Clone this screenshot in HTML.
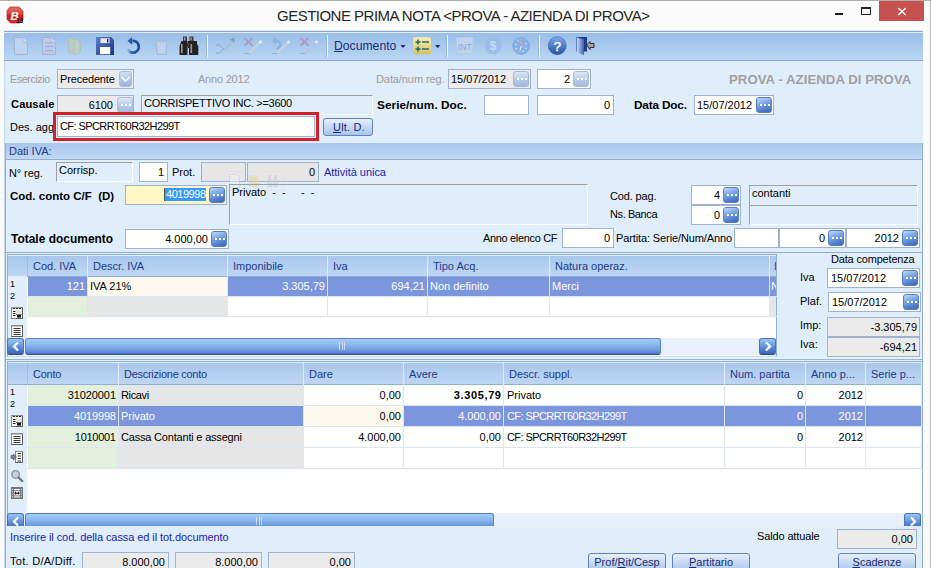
<!DOCTYPE html>
<html><head><meta charset="utf-8">
<style>
*{margin:0;padding:0;box-sizing:border-box}
html,body{width:931px;height:568px;overflow:hidden;background:#fbfbfb;font-family:"Liberation Sans",sans-serif;font-size:11px;color:#000}
.a{position:absolute}
.t{position:absolute;white-space:pre;line-height:13px;font-size:11px}
.b{font-weight:bold}
.g{color:#9a9a9a}
.f{position:absolute;background:#fff;border:1px solid #9fb3d0}
.fg{background:#ebebeb}
.ft{position:absolute;white-space:pre;line-height:13px;font-size:11px}
.r{text-align:right}
.eb{position:absolute;width:16px;height:16px;border-radius:3px;background:linear-gradient(160deg,#c2dcfa,#82acea 35%,#5684d2 70%,#3a64b2);border:1px solid #5a7ec0}
.eb:after{content:"";position:absolute;left:3px;top:6px;width:2px;height:2px;background:#fff;box-shadow:4px 0 #fff,8px 0 #fff}
.ebd{background:linear-gradient(#dae6f6,#b4c8e6 60%,#a4bade);border-color:#a6badc}
.sunk{position:absolute;border-top:1px solid #a0a0a0;border-left:1px solid #a0a0a0;border-right:1px solid #fff;border-bottom:1px solid #fff}
</style></head><body>
<!-- window frame -->
<div class="a" style="left:0;top:0;width:931px;height:1px;background:#b0b0b0"></div>
<div class="a" style="left:930px;top:0;width:1px;height:568px;background:#b8b8b8"></div>
<!-- title -->
<svg class="a" style="left:6px;top:6px" width="18" height="18">
<defs><linearGradient id="lg1" x1="0" y1="0" x2="0" y2="1"><stop offset="0" stop-color="#e86a6a"></stop><stop offset="0.45" stop-color="#d84040"></stop><stop offset="0.5" stop-color="#cc2020"></stop><stop offset="1" stop-color="#e02a30"></stop></linearGradient></defs>
<path d="M4 1 H13 L17 5 V14 L13.5 17 H4.5 L1 13.5 V4.5 Z" fill="url(#lg1)" stroke="#b01818" stroke-width="0.6"></path>
<text x="8.6" y="13.6" font-family="Liberation Sans" font-weight="bold" font-style="italic" font-size="11.5" text-anchor="middle" fill="#fff">B</text>
<text x="13.6" y="16.8" font-family="Liberation Sans" font-weight="bold" font-size="6.5" text-anchor="middle" fill="#111">13</text>
</svg>
<div class="t" style="left: 277px; top: 6.5px; font-size: 15px; line-height: 18px; color: rgb(38, 38, 38); letter-spacing: -0.51px;">GESTIONE PRIMA NOTA &lt;PROVA - AZIENDA DI PROVA&gt;</div>
<div class="a" style="left:835px;top:13px;width:8px;height:2px;background:#1a1a1a"></div>
<div class="a" style="left:861px;top:7px;width:10px;height:8px;border:1px solid #222;border-top-width:2px"></div>
<div class="a" style="left:879px;top:1px;width:45px;height:20px;background:#c75050"></div>
<svg class="a" style="left:897px;top:7px" width="10" height="9"><path d="M1.3 1 L8.7 8 M8.7 1 L1.3 8" stroke="#fff" stroke-width="1.5"></path></svg>

<!-- toolbar -->
<div class="a" style="left:4px;top:30px;width:919px;height:1px;background:#e0e8f0"></div><div class="a" style="left:4px;top:31px;width:919px;height:30px;background:linear-gradient(#98bce8,#bad6f3);border-top:1px solid #8ba6c8;border-bottom:1px solid #8aaad0"></div>
<div class="a" style="left:4px;top:32px;width:919px;height:1px;background:#e2f0fc"></div>


<svg class="a" style="left:0;top:0" width="931" height="62" viewBox="0 0 931 62">
<defs>
<linearGradient id="flp" x1="0" y1="0" x2="1" y2="1"><stop offset="0" stop-color="#5b82cc"></stop><stop offset="1" stop-color="#17327e"></stop></linearGradient>
<linearGradient id="hlp" x1="0" y1="0" x2="0" y2="1"><stop offset="0" stop-color="#7eaaea"></stop><stop offset="1" stop-color="#2850a8"></stop></linearGradient>
<linearGradient id="yel" x1="0" y1="0" x2="0" y2="1"><stop offset="0" stop-color="#fbf0a8"></stop><stop offset="1" stop-color="#d8c060"></stop></linearGradient>
<linearGradient id="door" x1="0" y1="0" x2="1" y2="0"><stop offset="0" stop-color="#c8d8f4"></stop><stop offset="1" stop-color="#3a5cb0"></stop></linearGradient>
</defs>
<!-- faded doc 1 -->
<path d="M14.5 37.5 H23 L27.5 42 V54.5 H14.5 Z" fill="#bcd4f2" stroke="#9fb8d8" stroke-width="1"></path>
<path d="M23 37.5 V42 H27.5" fill="#d8e6f8" stroke="#a8bedc" stroke-width="1"></path>
<!-- faded doc 2 -->
<path d="M42.5 37.5 H51 L55.5 42 V54.5 H42.5 Z" fill="#bccbec" stroke="#a4b4d8" stroke-width="1"></path>
<path d="M51 37.5 V42 H55.5" fill="#d8e2f6" stroke="#a8b8dc" stroke-width="1"></path>
<path d="M45 43 H52 M45 46.5 H53 M45 50.5 H53" stroke="#9eaed4" stroke-width="1"></path>
<!-- faded folder -->
<path d="M68.5 37.5 L77 39.5 L80.5 42 V51 L77 55 L68.5 52 Z" fill="#b8ccc4" stroke="#a8bcbc" stroke-width="0.8"></path>
<path d="M77 39.5 V55" stroke="#c8d8d0" stroke-width="1"></path>
<!-- floppy -->
<path d="M96 37 H111 L114 40 V55 H96 Z" fill="url(#flp)"></path>
<rect x="100.5" y="38.3" width="9" height="4.8" fill="#e8ecf2"></rect>
<rect x="107" y="39" width="1.4" height="3.4" fill="#1a2a5a"></rect>
<rect x="100" y="47" width="10.2" height="7.2" fill="#fff"></rect>
<!-- undo -->
<linearGradient id="und" x1="0" y1="0" x2="1" y2="0"><stop offset="0" stop-color="#2c5cb0" stop-opacity="0.2"></stop><stop offset="0.35" stop-color="#2c5cb0"></stop><stop offset="1" stop-color="#1e4a9c"></stop></linearGradient>
<path d="M132.3 40.9 A5.9 5.9 0 1 1 127.6 49.3" fill="none" stroke="url(#und)" stroke-width="2.8"></path>
<path d="M127.5 41 L132 37 L132.3 44.8 Z" fill="#2a58ac"></path>
<!-- faded trash -->
<path d="M155 40 H168 M158.5 39.5 V37.8 H164.5 V39.5" stroke="#a8c0e0" stroke-width="1.2" fill="none"></path>
<path d="M156 41 H167 L166 54.5 H157 Z" fill="#b6cdec" stroke="#a2badc" stroke-width="1"></path>
<path d="M159 43 V53 M161.5 43 V53 M164 43 V53" stroke="#c6d8f2" stroke-width="1"></path>
<!-- binoculars -->
<g>
<rect x="183" y="36.5" width="4" height="5" fill="#3a3a3a"></rect>
<rect x="189.5" y="36.5" width="4" height="5" fill="#3a3a3a"></rect>
<path d="M181 41 H188 V48 H197 V41 H188" fill="#2a2a2a"></path>
<rect x="187" y="43" width="3" height="4" fill="#444"></rect>
<path d="M179.5 46 L181.5 41 H187.5 V55 H179.5 Z" fill="#222"></path>
<path d="M189 41 H195 L198.3 46 V55 H189 Z" fill="#222"></path>
<rect x="181" y="44" width="1.6" height="9" fill="#9a9a9a"></rect>
<rect x="190.5" y="44" width="1.6" height="9" fill="#9a9a9a"></rect>
<rect x="184" y="37.5" width="1.2" height="3" fill="#aaa"></rect>
<rect x="190.5" y="37.5" width="1.2" height="3" fill="#aaa"></rect>
</g>
<!-- separators -->
<g stroke-width="1">
<path d="M206.5 35 V57" stroke="#9ab6da"></path><path d="M207.5 35 V57" stroke="#eef6fe"></path>
<path d="M326.5 35 V57" stroke="#9ab6da"></path><path d="M327.5 35 V57" stroke="#eef6fe"></path>
<path d="M446.5 35 V57" stroke="#9ab6da"></path><path d="M447.5 35 V57" stroke="#eef6fe"></path>
<path d="M538.5 35 V57" stroke="#9ab6da"></path><path d="M539.5 35 V57" stroke="#eef6fe"></path>
</g>
<!-- scissors faded -->
<path d="M216 45 H219 L224 49 L219 53 H216" fill="none" stroke="#8aa6c8" stroke-width="0.9"></path>
<path d="M224 49 L234 39 L235 41 L226 50 Z" fill="#a8bcd4"></path>
<path d="M230 40 L234 37.5 L235 42 Z" fill="#7a98be"></path>
<path d="M225 50 H234 L233 53 H228 Z" fill="#b4c8e0" opacity="0.7"></path>
<!-- X + pen 1 -->
<path d="M244.5 37.8 L252.5 45.8 M252.5 37.8 L244.5 45.8" stroke="#a89cc4" stroke-width="1.8"></path>
<path d="M249 53 L260.5 42" stroke="#c6d2e2" stroke-width="2.2" stroke-linecap="round"></path>
<circle cx="260.5" cy="42" r="1.4" fill="#e8eef6"></circle>
<path d="M244 53.5 H250" stroke="#96aed0" stroke-width="0.9"></path>
<!-- undo + pen -->
<path d="M277 49 L280.5 46 Q281 41 276 41 H273" fill="none" stroke="#88b0e0" stroke-width="2"></path>
<path d="M272 41 L276 37.5 V44.5 Z" fill="#88b0e0"></path>
<path d="M277 53 L288.5 42" stroke="#c6d2e2" stroke-width="2.2" stroke-linecap="round"></path>
<circle cx="288.5" cy="42" r="1.4" fill="#e8eef6"></circle>
<path d="M272 53.5 H278" stroke="#96aed0" stroke-width="0.9"></path>
<!-- X + pen 2 -->
<path d="M300.5 37.8 L308.5 45.8 M308.5 37.8 L300.5 45.8" stroke="#a89cc4" stroke-width="1.8"></path>
<path d="M305 53 L316.5 42" stroke="#b4c4e8" stroke-width="2.2" stroke-linecap="round"></path>
<circle cx="316.5" cy="42" r="1.4" fill="#e8eef6"></circle>
<path d="M300 53.5 H306" stroke="#96aed0" stroke-width="0.9"></path>
<!-- dropdown arrows -->
<path d="M400.5 45 H405.5 L403 48 Z" fill="#1c2c6c"></path>
<path d="M435 45 H440.5 L437.7 48 Z" fill="#1c2c6c"></path>
<!-- yellow list icon -->
<rect x="413" y="37.3" width="18" height="17" rx="2" fill="url(#yel)"></rect>
<path d="M415.5 42 H420.5 M418 39.5 V44.5 M415.5 49 H420.5 M418 46.5 V51.5 M422 42 H429 M422 49 H429" stroke="#1f6a7c" stroke-width="1.5"></path>
<!-- INT faded -->
<rect x="456.5" y="37.5" width="16.5" height="16.5" fill="#bcd4f0" stroke="#b4cae8" stroke-width="1"></rect>
<text x="464.8" y="49.5" font-family="Liberation Sans" font-size="9.5" text-anchor="middle" fill="#90a8dc" textLength="14" lengthAdjust="spacingAndGlyphs">INT</text>
<!-- $ faded -->
<circle cx="493.2" cy="45.7" r="8.6" fill="#9cbce8"></circle>
<text x="493.2" y="50" font-family="Liberation Sans" font-size="12" font-weight="bold" text-anchor="middle" fill="#c8dcf6">$</text>
<!-- compass faded -->
<circle cx="521.1" cy="46" r="8.4" fill="#86b2e8" stroke="#7ca4da" stroke-width="0.8"></circle>
<path d="M517.5 39.5 L518.5 41.5 M514.8 44 L516.5 44.8 M515 49 L516.8 48.3 M523.5 52 L522.8 50.3 M526.8 43.5 L525 44.3 M526.8 48.5 L525 48" stroke="#dceaf8" stroke-width="1"></path>
<path d="M523.2 39 L520.3 47 L519.5 52.5 L522 46 Z" fill="#e8f0fa"></path>
<path d="M523.2 39 L520.3 46.5 L522.3 45.5 Z" fill="#c88c9c"></path>
<!-- help -->
<circle cx="557.2" cy="45.7" r="9" fill="url(#hlp)" stroke="#3a64b0" stroke-width="0.6"></circle>
<text x="557.2" y="50.8" font-family="Liberation Sans" font-size="13.5" text-anchor="middle" fill="#fff" stroke="#fff" stroke-width="0.4">?</text>
<!-- door exit -->
<rect x="576.5" y="37" width="10.5" height="14.5" fill="#1e3c8c"></rect>
<path d="M577 37.5 L584 39.5 V55 L577 52.5 Z" fill="url(#door)"></path>
<path d="M586.5 45 L590 41.5 V43.5 H594 V47.5 H590 V49.5 Z" fill="#a0a0a0" stroke="#222" stroke-width="0.9"></path>
</svg>
<div class="t" style="left:334px;top:39px;color:#1c2c78;font-size:12.2px;line-height:14px"><u>D</u>ocumento</div>
<!-- form background -->
<div class="a" style="left:4px;top:61px;width:919px;height:507px;background:#e0eefc;border-left:1px solid #c6d6e8"></div>

<!-- row 1 -->
<div class="t g" style="left: 10px; top: 73px; letter-spacing: -0.541px;">Esercizio</div>
<div class="f fg" style="left:57px;top:69px;width:77px;height:20px"></div>
<div class="ft" style="left: 60px; top: 73px; letter-spacing: -0.163px;">Precedente</div>
<div class="a" style="left:119px;top:71px;width:13px;height:16px;border-radius:3px;background:linear-gradient(#d0def2,#9ab2da);border:1px solid #a8bcdc"></div><svg class="a" style="left:119px;top:71px" width="13" height="16"><path d="M2.5 6 L6.5 10 L10.5 6" stroke="#fff" stroke-width="1.6" fill="none" opacity="0.9"></path></svg>
<div class="t g" style="left: 198px; top: 73px; letter-spacing: -0.215px;">Anno 2012</div>
<div class="t g" style="left: 376px; top: 73px; letter-spacing: -0.092px;">Data/num reg.</div>
<div class="f fg" style="left:448px;top:69px;width:83px;height:20px"></div>
<div class="ft" style="left:451px;top:73px">15/07/2012</div>
<div class="eb ebd" style="left:513px;top:71px"></div>
<div class="f" style="left:537px;top:69px;width:54px;height:20px"></div>
<div class="ft r" style="left:540px;top:73px;width:30px">2</div>
<div class="eb ebd" style="left:573px;top:71px"></div>
<div class="t b g" style="left: 729px; top: 72px; font-size: 13.2px; line-height: 15px; color: rgb(160, 160, 160); letter-spacing: 0.047px;">PROVA - AZIENDA DI PROVA</div>

<!-- row 2 -->
<div class="t b" style="left: 11px; top: 98px; font-size: 11.2px; letter-spacing: 0.08px;">Causale</div>
<div class="f fg" style="left:57px;top:95px;width:77px;height:20px"></div>
<div class="ft r" style="left: 59.939px; top: 99px; width: 53px; letter-spacing: -0.061px;">6100</div>
<div class="eb ebd" style="left:117px;top:97px"></div>
<div class="sunk" style="left:141px;top:95px;width:232px;height:20px"></div>
<div class="ft" style="left: 144px; top: 97px; letter-spacing: -0.295px;">CORRISPETTIVO INC. &gt;=3600</div>
<div class="t b" style="left: 377px; top: 99px; font-size: 11.8px; letter-spacing: 0.038px;">Serie/num. Doc.</div>
<div class="f" style="left:484px;top:95px;width:45px;height:20px"></div>
<div class="f" style="left:537px;top:95px;width:77px;height:20px"></div>
<div class="ft r" style="left:540px;top:99px;width:70px">0</div>
<div class="t b" style="left: 634px; top: 99px; font-size: 11.8px; letter-spacing: -0.178px;">Data Doc.</div>
<div class="f" style="left:694px;top:95px;width:80px;height:20px"></div>
<div class="ft" style="left:697px;top:99px">15/07/2012</div>
<div class="eb" style="left:756px;top:97px"></div>

<!-- row 3 -->
<div class="t" style="left:10px;top:121px">Des. agg</div>
<div class="a" style="left:53px;top:112px;width:266px;height:29px;border:3px solid #d0202a"></div>
<div class="f" style="left:57px;top:116px;width:258px;height:21px"></div>
<div class="ft" style="left: 60px; top: 120px; letter-spacing: -0.575px;">CF: SPCRRT60R32H299T</div>
<div class="a" style="left:323px;top:118px;width:50px;height:18px;border-radius:3px;border:1px solid #6282bc;background:linear-gradient(#e8f0fc,#c8daf4 45%,#a8c4ec)"></div>
<div class="t" style="left: 333px; top: 121px; color: rgb(26, 42, 120); letter-spacing: 0.17px;"><u>U</u>lt. D.</div>

<!-- Dati IVA section -->
<div class="a" style="left:5px;top:143px;width:918px;height:17px;background:linear-gradient(#a9c7ec,#b6d1f1 60%,#c2d9f3);border-bottom:1px solid #8fb0d8"></div>
<div class="a" style="left:5px;top:143px;width:1px;height:425px;background:#90aed6"></div>
<div class="t" style="left:9px;top:145px;color:#1e3a8c">Dati IVA:</div>


<!-- Dati IVA rows -->
<div class="t" style="left: 9px; top: 167px; letter-spacing: -0.093px;">N° reg.</div>
<div class="sunk" style="left:56px;top:162px;width:77px;height:20px"></div>
<div class="ft" style="left:59px;top:164px">Corrisp.</div>
<div class="f" style="left:139px;top:162px;width:29px;height:20px"></div>
<div class="ft r" style="left:141px;top:166px;width:23px">1</div>
<div class="t" style="left:172px;top:166px">Prot.</div>
<div class="f fg" style="left:201px;top:162px;width:45px;height:20px;background:#e6e6e6"></div>
<div class="f fg" style="left:247px;top:162px;width:72px;height:20px;background:#e6e6e6"></div>
<div class="ft r" style="left:250px;top:166px;width:65px">0</div>
<div class="t" style="left: 324px; top: 166px; color: rgb(28, 28, 172); letter-spacing: -0.029px;">Attività unica</div>

<svg class="a" style="left:220px;top:168px" width="70" height="26" opacity="0.55">
<rect x="4.5" y="3.5" width="59" height="19" rx="3" fill="none" stroke="#d6dce4" stroke-width="1"></rect>
<path d="M9.5 6.5 H16 L19.5 10 V19.5 H9.5 Z" fill="#eef2f6" stroke="#c4ccd6" stroke-width="1"></path>
<path d="M29 7 L37 8 L40 11 V17 L37 20 L29 18 Z" fill="#e4d4a4"></path>
<path d="M48 7 H51 V11 H48 Z M54 7 H57 V11 H54 Z M47 11 H52 V19.5 H47 Z M53 11 H58 V19.5 H53 Z" fill="#c8ccd4"></path>
</svg>
<div class="t b" style="left: 10px; top: 190px; font-size: 11.5px; letter-spacing: 0.004px;">Cod. conto C/F  (D)</div>
<div class="f" style="left:125px;top:185px;width:102px;height:20px;background:#fef7c4"></div>
<div class="ft" style="left: 164px; top: 188px; background: rgb(51, 153, 255); color: rgb(255, 255, 255); padding: 0px 0px 0px 1px; border-left: 1px solid rgb(85, 85, 85); letter-spacing: -0.471px;">4019998</div>
<div class="eb" style="left:209px;top:187px"></div>
<div class="sunk" style="left:229px;top:184px;width:359px;height:41px"></div>
<div class="ft" style="left:232px;top:186px">Privato  -  -     -  -</div>

<div class="t" style="left: 610px; top: 190px; letter-spacing: -0.15px;">Cod. pag.</div>
<div class="f" style="left:691px;top:185px;width:50px;height:20px"></div>
<div class="ft r" style="left:694px;top:189px;width:26px">4</div>
<div class="eb" style="left:723px;top:187px"></div>
<div class="t" style="left: 610px; top: 208px; letter-spacing: -0.406px;">Ns. Banca</div>
<div class="f" style="left:691px;top:205px;width:50px;height:20px"></div>
<div class="ft r" style="left:694px;top:209px;width:26px">0</div>
<div class="eb" style="left:723px;top:207px"></div>
<div class="sunk" style="left:749px;top:185px;width:169px;height:21px"></div>
<div class="ft" style="left:752px;top:187px">contanti</div>
<div class="sunk" style="left:749px;top:205px;width:169px;height:20px"></div>

<div class="t b" style="left: 11px; top: 233px; font-size: 11.9px; letter-spacing: 0.039px;">Totale documento</div>
<div class="f" style="left:125px;top:229px;width:104px;height:20px"></div>
<div class="ft r" style="left:128px;top:233px;width:80px">4.000,00</div>
<div class="eb" style="left:211px;top:231px"></div>
<div class="t" style="left: 483px; top: 232px; letter-spacing: -0.338px;">Anno elenco CF</div>
<div class="f" style="left:562px;top:228px;width:52px;height:20px"></div>
<div class="ft r" style="left:565px;top:232px;width:45px">0</div>
<div class="t" style="left: 616px; top: 232px; letter-spacing: -0.115px;">Partita: Serie/Num/Anno</div>
<div class="f" style="left:734px;top:228px;width:45px;height:20px"></div>
<div class="f" style="left:779px;top:228px;width:67px;height:20px"></div>
<div class="ft r" style="left:782px;top:232px;width:43px">0</div>
<div class="eb" style="left:828px;top:230px"></div>
<div class="f" style="left:846px;top:228px;width:74px;height:20px"></div>
<div class="ft r" style="left:849px;top:232px;width:50px">2012</div>
<div class="eb" style="left:902px;top:230px"></div>
<div class="a" style="left:6px;top:252px;width:917px;height:1px;background:#92acd0"></div>
<div class="a" style="left:7px;top:254px;width:770px;height:103px;background:#fff;border:1px solid #8fb0d8;border-bottom-color:#c4daf2"></div>
<div class="a" style="left:8px;top:255px;width:768px;height:22px;background:linear-gradient(#a9c7ed,#bed6f3);border-top:1px solid #e2eefb;border-bottom:1px solid #8fb0d8"></div>
<div class="a" style="left:8px;top:276px;width:19px;height:79px;background:#e2eefb"></div>
<div class="a" style="left:87px;top:255px;width:1px;height:21px;background:#dfeafa"></div>
<div class="t" style="left:33px;top:260px;color:#1e3a8c">Cod. IVA</div>
<div class="a" style="left:227px;top:255px;width:1px;height:21px;background:#dfeafa"></div>
<div class="t" style="left:93px;top:260px;color:#1e3a8c">Descr. IVA</div>
<div class="a" style="left:327px;top:255px;width:1px;height:21px;background:#dfeafa"></div>
<div class="t" style="left:233px;top:260px;color:#1e3a8c">Imponibile</div>
<div class="a" style="left:427px;top:255px;width:1px;height:21px;background:#dfeafa"></div>
<div class="t" style="left:333px;top:260px;color:#1e3a8c">Iva</div>
<div class="a" style="left:549px;top:255px;width:1px;height:21px;background:#dfeafa"></div>
<div class="t" style="left:433px;top:260px;color:#1e3a8c">Tipo Acq.</div>
<div class="a" style="left:769px;top:255px;width:1px;height:21px;background:#dfeafa"></div>
<div class="t" style="left:555px;top:260px;color:#1e3a8c">Natura operaz.</div>
<div class="t" style="left:774px;top:260px;color:#1e3a8c;overflow:hidden;width:2px">I</div>
<div class="a" style="left:28px;top:277px;width:59px;height:19px;background:#7b96dc"></div>
<div class="t r" style="left:28px;top:280px;width:57px;color:#fff">121</div>
<div class="a" style="left:28px;top:297px;width:59px;height:19px;background:#e2f0dc"></div>
<div class="a" style="left:87px;top:276px;width:1px;height:41px;background:#dce6f2"></div>
<div class="a" style="left:88px;top:277px;width:139px;height:19px;background:#fef9ee"></div>
<div class="t" style="left:90px;top:280px;color:#000;overflow:hidden;width:137px">IVA 21%</div>
<div class="a" style="left:88px;top:297px;width:139px;height:19px;background:#e6e6e6"></div>
<div class="a" style="left:227px;top:276px;width:1px;height:41px;background:#dce6f2"></div>
<div class="a" style="left:228px;top:277px;width:99px;height:19px;background:#7b96dc"></div>
<div class="t r" style="left:228px;top:280px;width:97px;color:#fff">3.305,79</div>
<div class="a" style="left:228px;top:297px;width:99px;height:19px;background:#fff"></div>
<div class="a" style="left:327px;top:276px;width:1px;height:41px;background:#dce6f2"></div>
<div class="a" style="left:328px;top:277px;width:99px;height:19px;background:#7b96dc"></div>
<div class="t r" style="left:328px;top:280px;width:97px;color:#fff">694,21</div>
<div class="a" style="left:328px;top:297px;width:99px;height:19px;background:#fff"></div>
<div class="a" style="left:427px;top:276px;width:1px;height:41px;background:#dce6f2"></div>
<div class="a" style="left:428px;top:277px;width:121px;height:19px;background:#7b96dc"></div>
<div class="t" style="left:430px;top:280px;color:#fff;overflow:hidden;width:119px">Non definito</div>
<div class="a" style="left:428px;top:297px;width:121px;height:19px;background:#fff"></div>
<div class="a" style="left:549px;top:276px;width:1px;height:41px;background:#dce6f2"></div>
<div class="a" style="left:550px;top:277px;width:219px;height:19px;background:#7b96dc"></div>
<div class="t" style="left:552px;top:280px;color:#fff;overflow:hidden;width:217px">Merci</div>
<div class="a" style="left:550px;top:297px;width:219px;height:19px;background:#fff"></div>
<div class="a" style="left:769px;top:276px;width:1px;height:41px;background:#dce6f2"></div>
<div class="a" style="left:770px;top:277px;width:6px;height:19px;background:#7b96dc"></div>
<div class="t" style="left:771px;top:280px;color:#fff;overflow:hidden;width:5px">N</div>
<div class="a" style="left:770px;top:297px;width:6px;height:19px;background:#e6e6e6"></div>
<div class="a" style="left:27px;top:296px;width:750px;height:1px;background:#dce6f2"></div>
<div class="a" style="left:27px;top:316px;width:750px;height:1px;background:#dce6f2"></div>
<div class="t" style="left:10px;top:280px;font-size:9px;line-height:9px;color:#000">1</div>
<div class="t" style="left:10px;top:291.5px;font-size:9px;line-height:9px">2</div>
<div class="a" style="left:8px;top:338px;width:768px;height:17px;background:#e8f1fb"></div>
<div class="a" style="left:7px;top:338px;width:17px;height:17px;border-radius:3px;background:linear-gradient(#9cc6f4,#5e8eda 55%,#3a62b2);border:1px solid #4a70b8;border-bottom-color:#2a4888"></div>
<svg class="a" style="left:11px;top:341px" width="10" height="11"><path d="M7 1.5 L3 5.5 L7 9.5" stroke="#fff" stroke-width="2.2" fill="none"></path></svg>
<div class="a" style="left:25px;top:338px;width:636px;height:17px;border-radius:3px;background:linear-gradient(#a8cef6,#8ab6ec 40%,#6c9ade 75%,#4e78c4);border:1px solid #5a80c4;border-bottom-color:#2c4a90"></div>
<div class="a" style="left:339px;top:342px;width:6px;height:8px;border-left:1px solid #c8dcf6;border-right:1px solid #c8dcf6;background:linear-gradient(90deg,transparent 2px,#c8dcf6 2px,#c8dcf6 3px,transparent 3px)"></div>
<div class="a" style="left:759px;top:338px;width:17px;height:17px;border-radius:3px;background:linear-gradient(#9cc6f4,#5e8eda 55%,#3a62b2);border:1px solid #4a70b8;border-bottom-color:#2a4888"></div>
<svg class="a" style="left:763px;top:341px" width="10" height="11"><path d="M3 1.5 L7 5.5 L3 9.5" stroke="#fff" stroke-width="2.2" fill="none"></path></svg>
<div class="t" style="left: 831px; top: 253px; letter-spacing: -0.18px;">Data competenza</div>
<div class="t" style="left:800px;top:271px">Iva</div>
<div class="f" style="left:827px;top:268px;width:93px;height:20px"></div>
<div class="ft" style="left:831px;top:272px">15/07/2012</div>
<div class="eb" style="left:902px;top:270px"></div>
<div class="t" style="left:800px;top:295px">Plaf.</div>
<div class="f" style="left:828px;top:292px;width:93px;height:20px"></div>
<div class="ft" style="left:832px;top:296px">15/07/2012</div>
<div class="eb" style="left:903px;top:294px"></div>
<div class="t" style="left:800px;top:319px">Imp:</div>
<div class="f fg" style="left:827px;top:317px;width:93px;height:20px"></div>
<div class="ft r" style="left:830px;top:321px;width:87px">-3.305,79</div>
<div class="t" style="left:800px;top:338px">Iva:</div>
<div class="f fg" style="left:827px;top:337px;width:93px;height:20px"></div>
<div class="ft r" style="left:830px;top:341px;width:87px">-694,21</div>
<div class="a" style="left:6px;top:357px;width:917px;height:2px;background:#e4f4fd"></div><div class="a" style="left:6px;top:359px;width:917px;height:1px;background:#9ab2d2"></div>
<div class="a" style="left:7px;top:361px;width:916px;height:170px;background:#fff;border:1px solid #8fb0d8;border-bottom:none"></div>
<div class="a" style="left:8px;top:362px;width:914px;height:23px;background:linear-gradient(#a9c7ed,#bed6f3);border-top:1px solid #e2eefb;border-bottom:1px solid #8fb0d8"></div>
<div class="a" style="left:8px;top:385px;width:19px;height:128px;background:#e2eefb"></div>
<div class="a" style="left:118px;top:362px;width:1px;height:23px;background:#dfeafa"></div>
<div class="t" style="left: 33px; top: 368px; color: rgb(30, 58, 140); letter-spacing: -0.265px;">Conto</div>
<div class="a" style="left:303px;top:362px;width:1px;height:23px;background:#dfeafa"></div>
<div class="t" style="left: 124px; top: 368px; color: rgb(30, 58, 140); letter-spacing: -0.271px;">Descrizione conto</div>
<div class="a" style="left:403px;top:362px;width:1px;height:23px;background:#dfeafa"></div>
<div class="t" style="left:309px;top:368px;color:#1e3a8c">Dare</div>
<div class="a" style="left:503px;top:362px;width:1px;height:23px;background:#dfeafa"></div>
<div class="t" style="left:409px;top:368px;color:#1e3a8c">Avere</div>
<div class="a" style="left:724px;top:362px;width:1px;height:23px;background:#dfeafa"></div>
<div class="t" style="left:509px;top:368px;color:#1e3a8c">Descr. suppl.</div>
<div class="a" style="left:805px;top:362px;width:1px;height:23px;background:#dfeafa"></div>
<div class="t" style="left:730px;top:368px;color:#1e3a8c">Num. partita</div>
<div class="a" style="left:865px;top:362px;width:1px;height:23px;background:#dfeafa"></div>
<div class="t" style="left:811px;top:368px;color:#1e3a8c">Anno p...</div>
<div class="a" style="left:921px;top:362px;width:1px;height:23px;background:#dfeafa"></div>
<div class="t" style="left:871px;top:368px;color:#1e3a8c">Serie p...</div>
<div class="a" style="left:28px;top:385px;width:90px;height:20px;background:#e2f0dc"></div>
<div class="t r" style="left: 27.907px; top: 389px; width: 88px; color: rgb(0, 0, 0); letter-spacing: -0.093px;">31020001</div>
<div class="a" style="left:119px;top:385px;width:184px;height:20px;background:#e6e6e6"></div>
<div class="t" style="left: 121px; top: 389px; color: rgb(0, 0, 0); letter-spacing: -0.371px;">Ricavi</div>
<div class="a" style="left:304px;top:385px;width:99px;height:20px;background:#fff"></div>
<div class="t r" style="left:304px;top:389px;width:97px;color:#000">0,00</div>
<div class="a" style="left:404px;top:385px;width:99px;height:20px;background:#fff"></div>
<div class="t r" style="left: 404.625px; top: 389px; width: 97px; color: rgb(0, 0, 0); font-weight: bold; letter-spacing: 0.625px;">3.305,79</div>
<div class="a" style="left:504px;top:385px;width:220px;height:20px;background:#fff"></div>
<div class="t" style="left:507px;top:389px;color:#000">Privato</div>
<div class="a" style="left:725px;top:385px;width:80px;height:20px;background:#fff"></div>
<div class="t r" style="left:725px;top:389px;width:78px;color:#000">0</div>
<div class="a" style="left:806px;top:385px;width:59px;height:20px;background:#fff"></div>
<div class="t r" style="left:806px;top:389px;width:57px;color:#000">2012</div>
<div class="a" style="left:866px;top:385px;width:55px;height:20px;background:#fff"></div>
<div class="a" style="left:28px;top:406px;width:90px;height:20px;background:#7b96dc"></div>
<div class="t r" style="left: 27.845px; top: 410px; width: 88px; color: rgb(255, 255, 255); letter-spacing: -0.155px;">4019998</div>
<div class="a" style="left:119px;top:406px;width:184px;height:20px;background:#7b96dc"></div>
<div class="t" style="left: 121px; top: 410px; color: rgb(255, 255, 255); letter-spacing: -0.058px;">Privato</div>
<div class="a" style="left:304px;top:406px;width:99px;height:20px;background:#fef9ee"></div>
<div class="t r" style="left:304px;top:410px;width:97px;color:#000">0,00</div>
<div class="a" style="left:404px;top:406px;width:99px;height:20px;background:#7b96dc"></div>
<div class="t r" style="left:404px;top:410px;width:97px;color:#fff">4.000,00</div>
<div class="a" style="left:504px;top:406px;width:220px;height:20px;background:#7b96dc"></div>
<div class="t" style="left: 507px; top: 410px; color: rgb(255, 255, 255); letter-spacing: -0.575px;">CF: SPCRRT60R32H299T</div>
<div class="a" style="left:725px;top:406px;width:80px;height:20px;background:#7b96dc"></div>
<div class="t r" style="left:725px;top:410px;width:78px;color:#fff">0</div>
<div class="a" style="left:806px;top:406px;width:59px;height:20px;background:#7b96dc"></div>
<div class="t r" style="left:806px;top:410px;width:57px;color:#fff">2012</div>
<div class="a" style="left:866px;top:406px;width:55px;height:20px;background:#7b96dc"></div>
<div class="a" style="left:28px;top:427px;width:90px;height:20px;background:#e2f0dc"></div>
<div class="t r" style="left: 27.729px; top: 431px; width: 88px; color: rgb(0, 0, 0); letter-spacing: -0.271px;">1010001</div>
<div class="a" style="left:119px;top:427px;width:184px;height:20px;background:#e6e6e6"></div>
<div class="t" style="left: 121px; top: 431px; color: rgb(0, 0, 0); letter-spacing: -0.194px;">Cassa Contanti e assegni</div>
<div class="a" style="left:304px;top:427px;width:99px;height:20px;background:#fff"></div>
<div class="t r" style="left:304px;top:431px;width:97px;color:#000">4.000,00</div>
<div class="a" style="left:404px;top:427px;width:99px;height:20px;background:#fff"></div>
<div class="t r" style="left:404px;top:431px;width:97px;color:#000">0,00</div>
<div class="a" style="left:504px;top:427px;width:220px;height:20px;background:#fff"></div>
<div class="t" style="left: 507px; top: 431px; color: rgb(0, 0, 0); letter-spacing: -0.575px;">CF: SPCRRT60R32H299T</div>
<div class="a" style="left:725px;top:427px;width:80px;height:20px;background:#fff"></div>
<div class="t r" style="left:725px;top:431px;width:78px;color:#000">0</div>
<div class="a" style="left:806px;top:427px;width:59px;height:20px;background:#fff"></div>
<div class="t r" style="left:806px;top:431px;width:57px;color:#000">2012</div>
<div class="a" style="left:866px;top:427px;width:55px;height:20px;background:#fff"></div>
<div class="a" style="left:28px;top:448px;width:90px;height:20px;background:#e2f0dc"></div>
<div class="a" style="left:119px;top:448px;width:184px;height:20px;background:#e6e6e6"></div>
<div class="a" style="left:304px;top:448px;width:99px;height:20px;background:#fff"></div>
<div class="a" style="left:404px;top:448px;width:99px;height:20px;background:#fff"></div>
<div class="a" style="left:504px;top:448px;width:220px;height:20px;background:#fff"></div>
<div class="a" style="left:725px;top:448px;width:80px;height:20px;background:#fff"></div>
<div class="a" style="left:806px;top:448px;width:59px;height:20px;background:#fff"></div>
<div class="a" style="left:866px;top:448px;width:55px;height:20px;background:#fff"></div>
<div class="a" style="left:118px;top:385px;width:1px;height:84px;background:#dce6f2"></div>
<div class="a" style="left:303px;top:385px;width:1px;height:84px;background:#dce6f2"></div>
<div class="a" style="left:403px;top:385px;width:1px;height:84px;background:#dce6f2"></div>
<div class="a" style="left:503px;top:385px;width:1px;height:84px;background:#dce6f2"></div>
<div class="a" style="left:724px;top:385px;width:1px;height:84px;background:#dce6f2"></div>
<div class="a" style="left:805px;top:385px;width:1px;height:84px;background:#dce6f2"></div>
<div class="a" style="left:865px;top:385px;width:1px;height:84px;background:#dce6f2"></div>
<div class="a" style="left:921px;top:385px;width:1px;height:84px;background:#dce6f2"></div>
<div class="a" style="left:27px;top:405px;width:895px;height:1px;background:#dce6f2"></div>
<div class="a" style="left:27px;top:426px;width:895px;height:1px;background:#dce6f2"></div>
<div class="a" style="left:27px;top:447px;width:895px;height:1px;background:#dce6f2"></div>
<div class="a" style="left:27px;top:468px;width:895px;height:1px;background:#dce6f2"></div>
<div class="t" style="left:10px;top:388px;font-size:9px;line-height:9px;color:#000">1</div>
<div class="t" style="left:10px;top:399.7px;font-size:9px;line-height:9px">2</div>
<div class="a" style="left:8px;top:513px;width:914px;height:13px;background:#e8f1fb"></div>
<div class="a" style="left:7px;top:513px;width:17px;height:17px;border-radius:3px;background:linear-gradient(#9cc6f4,#5e8eda 55%,#3a62b2);border:1px solid #4a70b8;border-bottom-color:#2a4888"></div>
<svg class="a" style="left:11px;top:516px" width="10" height="11"><path d="M7 1.5 L3 5.5 L7 9.5" stroke="#fff" stroke-width="2.2" fill="none"></path></svg>
<div class="a" style="left:25px;top:513px;width:469px;height:17px;border-radius:3px;background:linear-gradient(#a8cef6,#8ab6ec 40%,#6c9ade 75%,#4e78c4);border:1px solid #5a80c4;border-bottom-color:#2c4a90"></div>
<div class="a" style="left:256px;top:517px;width:6px;height:8px;border-left:1px solid #c8dcf6;border-right:1px solid #c8dcf6;background:linear-gradient(90deg,transparent 2px,#c8dcf6 2px,#c8dcf6 3px,transparent 3px)"></div>
<div class="a" style="left:904px;top:513px;width:17px;height:17px;border-radius:3px;background:linear-gradient(#9cc6f4,#5e8eda 55%,#3a62b2);border:1px solid #4a70b8;border-bottom-color:#2a4888"></div>
<svg class="a" style="left:908px;top:516px" width="10" height="11"><path d="M3 1.5 L7 5.5 L3 9.5" stroke="#fff" stroke-width="2.2" fill="none"></path></svg>
<div class="a" style="left:5px;top:526px;width:918px;height:42px;background:#e0eefc"></div>
<div class="a" style="left:5px;top:526px;width:1px;height:42px;background:#9ab6da"></div>
<div class="t" style="left: 10px; top: 531px; color: rgb(26, 26, 184); letter-spacing: -0.082px;">Inserire il cod. della cassa ed il tot.documento</div>
<div class="t" style="left: 757px; top: 530px; letter-spacing: -0.135px;">Saldo attuale</div>
<div class="f fg" style="left:837px;top:529px;width:80px;height:20px"></div>
<div class="ft r" style="left:840px;top:533px;width:73px">0,00</div>
<div class="t" style="left: 10px; top: 555px; letter-spacing: 0.281px;">Tot. D/A/Diff.</div>
<div class="f fg" style="left:82px;top:552px;width:87px;height:20px"></div>
<div class="f fg" style="left:175px;top:552px;width:87px;height:20px"></div>
<div class="f fg" style="left:268px;top:552px;width:87px;height:20px"></div>
<div class="ft r" style="left:85px;top:556px;width:80px">8.000,00</div>
<div class="ft r" style="left:178px;top:556px;width:80px">8.000,00</div>
<div class="ft r" style="left:271px;top:556px;width:80px">0,00</div>
<div class="a" style="left:588px;top:553px;width:78px;height:20px;border-radius:3px;border:1px solid #6282bc;background:linear-gradient(#e8f0fc,#c8daf4 45%,#a8c4ec)"></div>
<div class="t" style="left:588px;top:556px;width:78px;text-align:center;color:#1a2a78">Prof/<u>R</u>it/Cesp</div>
<div class="a" style="left:672px;top:553px;width:78px;height:20px;border-radius:3px;border:1px solid #6282bc;background:linear-gradient(#e8f0fc,#c8daf4 45%,#a8c4ec)"></div>
<div class="t" style="left:672px;top:556px;width:78px;text-align:center;color:#1a2a78"><u>P</u>artitario</div>
<div class="a" style="left:838px;top:553px;width:78px;height:20px;border-radius:3px;border:1px solid #6282bc;background:linear-gradient(#e8f0fc,#c8daf4 45%,#a8c4ec)"></div>
<div class="t" style="left:838px;top:556px;width:78px;text-align:center;color:#1a2a78"><u>S</u>cadenze</div>
<svg class="a" style="left:0;top:0" width="30" height="568"><g transform="translate(11,307)">
<rect x="0.5" y="0.5" width="11" height="11" fill="#f6f6f6" stroke="#8c8c8c" stroke-width="1"></rect>
<path d="M11.5 0.5 V11.5 H0.5" fill="none" stroke="#5c5c5c" stroke-width="1"></path>
<path d="M1 1.5 H11" stroke="#c8c8c8" stroke-width="1"></path>
<path d="M2 1.5 H4 M5 1.5 H7 M8 1.5 H10" stroke="#333" stroke-width="1"></path>
<path d="M2 4.5 H4.5 M2 6.5 H4.5 M2 8.5 H4.5" stroke="#222" stroke-width="1"></path>
<rect x="5" y="3" width="6" height="4" fill="#e4e4e4"></rect>
<path d="M5 7.5 H11" stroke="#777" stroke-width="1"></path>
<rect x="6" y="8" width="4" height="2.6" fill="#1a1a1a"></rect>
<rect x="1" y="9.2" width="4" height="2" fill="#fff"></rect>
</g><g transform="translate(11,325)">
<rect x="0.5" y="0.5" width="11" height="11" fill="#fbfbfb" stroke="#8c8c8c" stroke-width="1"></rect>
<path d="M11.5 0.5 V11.5 H0.5" fill="none" stroke="#5c5c5c" stroke-width="1"></path>
<path d="M1 1.5 H11" stroke="#c4c4c4" stroke-width="1"></path>
<path d="M2.5 3.5 H9.5 M2.5 5.5 H9.5 M2.5 7.5 H9.5 M2.5 9.5 H9.5" stroke="#3a3a3a" stroke-width="1"></path>
</g><g transform="translate(11,415)">
<rect x="0.5" y="0.5" width="11" height="11" fill="#f6f6f6" stroke="#8c8c8c" stroke-width="1"></rect>
<path d="M11.5 0.5 V11.5 H0.5" fill="none" stroke="#5c5c5c" stroke-width="1"></path>
<path d="M1 1.5 H11" stroke="#c8c8c8" stroke-width="1"></path>
<path d="M2 1.5 H4 M5 1.5 H7 M8 1.5 H10" stroke="#333" stroke-width="1"></path>
<path d="M2 4.5 H4.5 M2 6.5 H4.5 M2 8.5 H4.5" stroke="#222" stroke-width="1"></path>
<rect x="5" y="3" width="6" height="4" fill="#e4e4e4"></rect>
<path d="M5 7.5 H11" stroke="#777" stroke-width="1"></path>
<rect x="6" y="8" width="4" height="2.6" fill="#1a1a1a"></rect>
<rect x="1" y="9.2" width="4" height="2" fill="#fff"></rect>
</g><g transform="translate(11,433)">
<rect x="0.5" y="0.5" width="11" height="11" fill="#fbfbfb" stroke="#8c8c8c" stroke-width="1"></rect>
<path d="M11.5 0.5 V11.5 H0.5" fill="none" stroke="#5c5c5c" stroke-width="1"></path>
<path d="M1 1.5 H11" stroke="#c4c4c4" stroke-width="1"></path>
<path d="M2.5 3.5 H9.5 M2.5 5.5 H9.5 M2.5 7.5 H9.5 M2.5 9.5 H9.5" stroke="#3a3a3a" stroke-width="1"></path>
</g><g transform="translate(11,451)">
<rect x="4.5" y="0.5" width="7" height="11" fill="#fbfbfb" stroke="#8c8c8c" stroke-width="1"></rect>
<path d="M11.5 0.5 V11.5 H4.5" fill="none" stroke="#5c5c5c" stroke-width="1"></path>
<path d="M7 2.5 H10 M7 5 H10 M7 7.5 H10 M7 10 H10" stroke="#333" stroke-width="1"></path>
<path d="M6 2.5 H6.6 M6 5 H6.6 M6 7.5 H6.6 M6 10 H6.6" stroke="#777" stroke-width="1"></path>
<path d="M0 4.5 H2.5 V3 L5.5 6 L2.5 9 V7.5 H0 Z" fill="#7a8698" stroke="#444c58" stroke-width="0.6"></path>
</g><g transform="translate(11,469.5)">
<circle cx="4.6" cy="4.9" r="3.8" fill="#c8d0d8" stroke="#8a949e" stroke-width="1.4"></circle>
<path d="M7.5 8 L11.3 11.6" stroke="#6a747e" stroke-width="2.2" stroke-linecap="round"></path>
</g><g transform="translate(11,487)">
<rect x="0" y="0" width="12" height="12" fill="#767676"></rect>
<path d="M1.5 2 V10.5 M10.5 2 V10.5" stroke="#e8e8e8" stroke-width="1" stroke-dasharray="1 1.4"></path>
<rect x="3" y="2" width="6" height="1.2" fill="#f0f0f0"></rect>
<rect x="3" y="9.3" width="6" height="1.2" fill="#f0f0f0"></rect>
<rect x="3" y="4" width="6" height="4.5" fill="#e4e4e4"></rect>
<path d="M3.2 6.2 L5 4.6 V7.8 Z M8.8 6.2 L7 4.6 V7.8 Z" fill="#111"></path>
<rect x="4.5" y="5.7" width="3" height="1.1" fill="#111"></rect>
</g></svg>
<div class="a" style="left:27px;top:256px;width:1px;height:20px;background:#8fb0d8;opacity:.6"></div>
<div class="a" style="left:27px;top:363px;width:1px;height:21px;background:#8fb0d8;opacity:.6"></div>
<div class="a" style="left:922px;top:143px;width:1px;height:425px;background:#90aed6"></div>

</body></html>
